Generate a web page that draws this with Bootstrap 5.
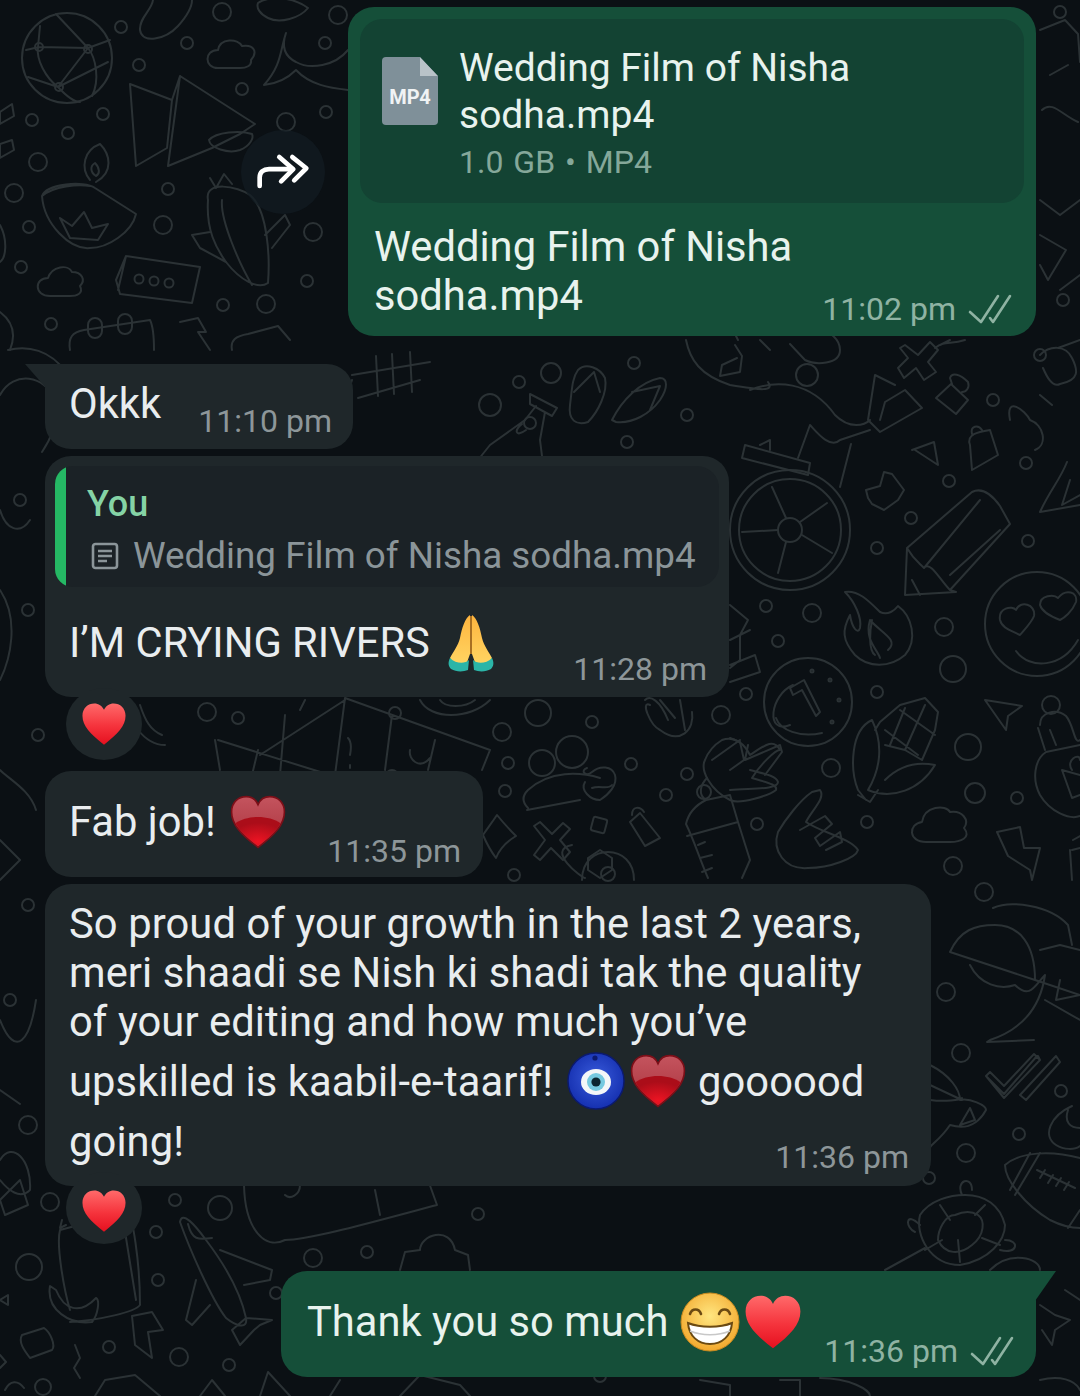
<!doctype html>
<html lang="en">
<head>
<meta charset="utf-8">
<title>Chat</title>
<link href="https://cdn.jsdelivr.net/npm/bootstrap@5.3.0/dist/css/bootstrap.min.css" rel="stylesheet">
<style>
html,body{margin:0;background:#0b1014}
.chat-screen{width:1080px;height:1396px;position:relative;overflow:hidden;background:#0b1014;font-family:Roboto,"Liberation Sans",sans-serif;color:#e9edef;padding-top:7px}
.wall{position:absolute;left:0;top:0;width:1080px;height:1396px}
.wall g.dd{fill:none;stroke:#2b3235;stroke-width:2;stroke-linecap:round;stroke-linejoin:round}
.msg-row{position:relative;display:flex}
.bubble{position:relative;border-radius:26px;display:flex}
.b-in{background:#1f272a;margin-left:45px}
.b-out{background:#154f39;color:#e8f3ee}
.line{font-size:41.7px;line-height:49px;white-space:nowrap}
.line-fix{height:49px;display:flex;align-items:center}
.stamp{font-size:32px;line-height:36px;white-space:nowrap;display:flex;align-items:center;gap:12px}
.b-in .stamp{color:#8d9699}
.b-out .stamp{color:#8fb3a3}
.ticks{width:44px;height:30px}
.fw-btn{width:84px;height:84px;border-radius:50%;background:rgba(18,28,35,.72);margin-right:23px;display:flex;align-items:center;justify-content:center}
.fw-btn svg{width:56px;height:38px}
.b1{width:688px;height:329px;padding:12px;flex-direction:column;margin-right:44px}
.attach{height:184px;border-radius:22px;background:#134333;padding:26px 22px;display:flex;gap:21px}
.file-ic{position:relative;width:56px;height:68px;margin-top:12px;background:#7f9099;border-radius:4px;clip-path:polygon(0 0,68% 0,100% 28%,100% 100%,0 100%);display:flex;align-items:center;justify-content:center;flex:none}
.file-ic span{font-size:20px;font-weight:700;color:#f0f3f4;margin-top:12px;letter-spacing:-.2px}
.fold{position:absolute;right:0;top:0;width:18px;height:19px;background:#b9c3c8;clip-path:polygon(0 0,100% 100%,0 100%)}
.att-title{font-size:39px;line-height:47px;white-space:nowrap}
.att-meta{font-size:32px;line-height:44px;color:#85a89a;white-space:pre;word-spacing:2px;margin-top:1px}
.cap{display:flex;justify-content:space-between;padding:19px 12px 0 14px;flex:1}
.cap .stamp{align-self:flex-end;margin-bottom:-3px}
.b2{width:308px;height:85px;margin-top:28px;padding:15px 21px 0 24px;justify-content:space-between;border-top-left-radius:0}
.b2::before{content:"";position:absolute;left:-20px;top:0;width:21px;height:24px;background:#1f272a;clip-path:polygon(0 0,100% 0,100% 100%)}
.b2 .stamp{margin-top:14px}
.b3{width:684px;height:241px;margin-top:7px;padding:10px;flex-direction:column}
.quote{height:124px;background:#1b2226;border-radius:18px 22px 22px 18px;position:relative;overflow:hidden;padding:10px 0 0 32px}
.quote::before{content:"";position:absolute;left:0;top:0;bottom:0;width:11px;background:#25b864}
.q-name{color:#85d3a5;font-size:36px;line-height:56px;font-weight:500}
.q-text{color:#8b9599;font-size:36.8px;line-height:44px;display:flex;align-items:center;gap:14px;white-space:nowrap;margin:2px 0 0 4px}
.q-text svg{width:28px;height:28px}
.b3-body{display:flex;justify-content:space-between;padding:31px 12px 0 14px}
.b3-body .stamp{margin-top:33px}
.rxn{width:76px;height:72px;border-radius:50%;background:#1f272a;margin-left:66px;display:flex;align-items:center;justify-content:center;position:relative;z-index:2}
.rxn svg{width:48px;height:44px}
.rxn-1{margin-top:-9px}
.rxn-2{margin-top:-14px;padding-top:6px}
.b4{width:438px;height:106px;margin-top:11px;padding:26px 22px 0 24px;justify-content:space-between}
.b4 .stamp{margin-top:27px}
.b5{width:886px;height:302px;margin-top:7px;padding:15px 22px 0 24px;display:block}
.b5 .line{letter-spacing:.1px}
.b5 .stamp{letter-spacing:0}
.em-line{height:60px;display:flex;align-items:center}
.l4{margin-top:5px}
.l5{justify-content:space-between}
.l5 .stamp{margin-top:32px}
.b6{width:755px;height:106px;margin:27px 44px 0 auto;padding:26px 22px 0 26px;justify-content:space-between;border-top-right-radius:0}
.b6::after{content:"";position:absolute;right:-20px;top:0;width:21px;height:30px;background:#154f39;clip-path:polygon(0 0,100% 0,0 100%)}
.b6 .stamp{margin-top:28px}
.em{flex:none;display:inline-block}
.em-pray{width:48px;height:58px;margin-left:7px}
.em-gheart{width:60px;height:54px;margin-left:2px}
.em-nazar{width:58px;height:58px;margin-left:3px}
.em-gheart2{width:60px;height:54px;margin-left:3px}
.em-grin{width:60px;height:60px;margin-left:1px}
.em-rheart{width:60px;height:56px;margin-left:3px}
</style>
</head>
<body>
<div class="chat-screen">
<svg class="wall" viewBox="0 0 1080 1396" aria-hidden="true">
<defs>
<linearGradient id="rh" x1="0" y1="0" x2="0" y2="1"><stop offset="0" stop-color="#ff6a6a"/><stop offset=".55" stop-color="#f5333c"/><stop offset="1" stop-color="#e5101f"/></linearGradient>
<linearGradient id="gh1" x1="0" y1="0" x2="0" y2="1"><stop offset="0" stop-color="#c4545e"/><stop offset="1" stop-color="#a9323c"/></linearGradient>
<radialGradient id="gh2" cx=".5" cy=".85" r=".65"><stop offset="0" stop-color="#ee1423"/><stop offset="1" stop-color="#ab0d19"/></radialGradient>
<radialGradient id="gface" cx=".5" cy=".4" r=".6"><stop offset="0" stop-color="#ffe680"/><stop offset="1" stop-color="#f3a92e"/></radialGradient>
<radialGradient id="nz" cx=".5" cy=".45" r=".55"><stop offset="0" stop-color="#3a5cdc"/><stop offset="1" stop-color="#1530b0"/></radialGradient>
<linearGradient id="pr" x1="0" y1="0" x2="0" y2="1"><stop offset="0" stop-color="#ffb53e"/><stop offset="1" stop-color="#ffd765"/></linearGradient>
<symbol id="heartR" viewBox="0 0 100 96"><path fill="url(#rh)" d="M50 93C20 70 3 52 3 30 3 13 15 3 29 3c9 0 17 5 21 14C54 8 62 3 71 3c14 0 26 10 26 27 0 22-17 40-47 63z"/></symbol>
<symbol id="heartG" viewBox="0 0 100 96"><path fill="url(#gh1)" stroke="#7c0f18" stroke-width="3" d="M50 93C20 70 3 52 3 30 3 13 15 3 29 3c9 0 17 5 21 14C54 8 62 3 71 3c14 0 26 10 26 27 0 22-17 40-47 63z"/><path fill="url(#gh2)" d="M50 91C30 75 17 64 10 50c10-7 25-11 40-11s30 4 40 11C83 64 70 75 50 91z"/></symbol>
</defs>
<g class="dd">
<circle cx="222" cy="12" r="9"/><circle cx="121" cy="27" r="6"/><circle cx="338" cy="15" r="9"/><circle cx="187" cy="43" r="6"/><circle cx="325" cy="43" r="6"/><circle cx="139" cy="65" r="6"/><circle cx="242" cy="89" r="6"/><circle cx="32" cy="120" r="6"/><circle cx="103" cy="114" r="6"/><circle cx="68" cy="133" r="6"/><circle cx="38" cy="162" r="9"/><circle cx="14" cy="193" r="9"/><circle cx="168" cy="189" r="6"/><circle cx="163" cy="225" r="9"/><circle cx="29" cy="227" r="6"/><circle cx="21" cy="267" r="6"/><circle cx="51" cy="324" r="6"/><circle cx="223" cy="305" r="6"/><circle cx="266" cy="304" r="9"/><circle cx="307" cy="281" r="6"/><circle cx="313" cy="232" r="9"/><circle cx="326" cy="112" r="6"/><circle cx="286" cy="122" r="9"/>
<circle cx="993" cy="400" r="6"/><circle cx="1026" cy="463" r="6"/><circle cx="949" cy="481" r="6"/><circle cx="911" cy="518" r="6"/><circle cx="877" cy="548" r="6"/><circle cx="1028" cy="541" r="6"/><circle cx="766" cy="606" r="6"/><circle cx="812" cy="613" r="9"/><circle cx="778" cy="641" r="6"/><circle cx="944" cy="627" r="9"/><circle cx="953" cy="669" r="13"/><circle cx="746" cy="694" r="6"/><circle cx="877" cy="692" r="6"/><circle cx="1051" cy="705" r="9"/><circle cx="968" cy="747" r="13"/><circle cx="831" cy="768" r="9"/><circle cx="975" cy="793" r="10"/><circle cx="1017" cy="798" r="6"/><circle cx="867" cy="822" r="6"/><circle cx="757" cy="824" r="6"/><circle cx="953" cy="866" r="9"/>
<circle cx="538" cy="713" r="13"/><circle cx="592" cy="722" r="6"/><circle cx="502" cy="732" r="9"/><circle cx="508" cy="763" r="6"/><circle cx="505" cy="791" r="6"/><circle cx="542" cy="763" r="13"/><circle cx="572" cy="752" r="16"/><circle cx="631" cy="764" r="6"/><circle cx="687" cy="774" r="6"/><circle cx="666" cy="795" r="6"/><circle cx="721" cy="715" r="9"/><circle cx="514" cy="875" r="6"/>
<circle cx="984" cy="892" r="9"/><circle cx="946" cy="992" r="9"/><circle cx="961" cy="1053" r="9"/><circle cx="1061" cy="1091" r="6"/><circle cx="1019" cy="1134" r="6"/><circle cx="966" cy="1153" r="9"/><circle cx="929" cy="1178" r="6"/>
<circle cx="50" cy="1202" r="9"/><circle cx="175" cy="1200" r="6"/><circle cx="220" cy="1208" r="12"/><circle cx="156" cy="1232" r="6"/><circle cx="29" cy="1267" r="13"/><circle cx="158" cy="1280" r="6"/><circle cx="313" cy="1258" r="9"/><circle cx="367" cy="1252" r="6"/><circle cx="478" cy="1214" r="6"/><circle cx="109" cy="1347" r="6"/><circle cx="179" cy="1357" r="9"/><circle cx="229" cy="1365" r="6"/><circle cx="43" cy="1387" r="8"/><circle cx="276" cy="1293" r="6"/>
<circle cx="551" cy="373" r="10"/><circle cx="519" cy="382" r="6"/><circle cx="490" cy="405" r="11"/><circle cx="634" cy="363" r="6"/><circle cx="687" cy="415" r="6"/><circle cx="627" cy="442" r="6"/>
<circle cx="207" cy="712" r="9"/><circle cx="238" cy="718" r="6"/><circle cx="395" cy="713" r="6"/><circle cx="38" cy="735" r="6"/><circle cx="28" cy="905" r="6"/><circle cx="28" cy="1125" r="9"/><circle cx="10" cy="1000" r="6"/><circle cx="20" cy="500" r="6"/><circle cx="28" cy="610" r="6"/><circle cx="392" cy="776" r="6"/><circle cx="1060" cy="12" r="6"/><circle cx="1063" cy="300" r="6"/><circle cx="1040" cy="355" r="6"/><circle cx="600" cy="1376" r="6"/>
<circle cx="67" cy="58" r="45"/><path d="M26 50 39 47 88 48 110 40M28 77 58 87 108 62M38 47C36 60 46 78 58 87 70 100 76 102 80 102M56 14 88 48C96 58 100 80 92 96M38 47 40 26M58 87 88 48"/><circle cx="39" cy="47" r="4"/><circle cx="88" cy="49" r="4"/><circle cx="59" cy="87" r="4"/>
<path d="M153 0C152 10 139 18 140 30 142 44 165 40 178 26 187 16 192 8 192 0"/>
<path d="M258 3C268 -4 292-4 308 8 300 18 280 24 268 18 260 14 256 8 258 3z"/>
<path d="M218 68C204 68 204 50 218 50 220 38 238 38 242 46 254 44 258 52 251 60 252 66 246 68 240 68z"/>
<path d="M286 33C280 50 288 58 296 62 310 70 335 66 348 50M286 33C280 50 282 65 264 85 274 84 286 80 296 70 310 85 330 88 348 90"/>
<path d="M130 84 172 100 167 148 136 166 130 84zM180 76 255 124 240 134 212 148 168 166 180 76zM180 76 172 100"/>
<path d="M209 140C210 148 228 154 240 150 250 146 254 138 252 134 240 130 216 132 209 140z"/>
<path d="M42 196C46 184 84 180 95 188L136 214C132 232 108 248 90 248 70 250 44 224 42 196zM42 196C54 186 78 184 90 186"/><path d="M90 180C80 168 84 150 100 144 110 154 114 172 96 182M96 176C90 172 90 166 95 163 100 168 100 174 96 176z"/><path d="M60 218 72 226 84 212 92 228 108 224 98 240 70 238z"/>
<path d="M208 200C204 180 238 186 250 195 268 210 270 258 268 283 258 290 240 280 226 262 216 248 206 230 208 200zM222 200C220 220 240 265 252 285M210 178 216 188 224 174 232 184M210 232 192 235 200 248 226 262M265 235 285 215 290 225 272 248"/>
<path d="M126 256 200 267 192 303 120 294 116 280zM126 256 118 290"/><circle cx="139" cy="279" r="4.5"/><circle cx="154" cy="281" r="4.5"/><circle cx="169" cy="283" r="4.5"/>
<path d="M50 296C34 296 34 278 48 278 52 266 68 264 72 272 82 272 86 280 80 286 84 294 76 296 70 296z"/>
<path d="M70 350C68 338 72 332 84 330L150 320C154 328 154 340 154 350"/><rect x="88" y="318" width="14" height="20" rx="7"/><rect x="118" y="314" width="14" height="20" rx="7"/><path d="M180 322 198 318 206 332 198 332 210 350"/><path d="M232 350C230 340 236 336 248 334L278 326 290 340"/><path d="M10 350C18 330 8 318 0 312"/>
<path d="M0 112 12 104 14 116 0 124zM0 144 12 140 14 150 0 158zM0 225C8 240 6 258 0 262"/><path d="M8 350C28 345 50 350 66 372M0 395C14 370 45 375 55 400 60 420 50 440 42 452"/><path d="M0 510C6 530 20 535 30 520M0 590C20 620 10 660 0 680M0 770C10 780 30 790 36 810M0 840 20 860 0 880M0 1020C16 1060 30 1040 36 1000M0 1160C12 1140 32 1160 30 1190 20 1200 8 1190 0 1180M0 1090 20 1104"/>
<path d="M352 375 430 362M358 398 420 380M376 356 378 396M392 354 394 394M410 352 412 392M352 380 344 404"/>
<path d="M530 394 557 408 552 416 530 404zM536 406 525 420 490 445 478 460M545 412 540 440 542 456M522 424C514 430 515 438 526 430"/><circle cx="530" cy="423" r="6"/>
<path d="M578 370C586 362 600 368 605 378 608 392 598 412 588 422 576 426 568 420 570 405 572 390 572 378 578 370zM574 392 594 372 600 392"/>
<path d="M612 420C622 400 640 382 660 378 668 378 668 388 660 400 650 414 632 424 616 422zM632 392 660 386 650 410"/>
<path d="M735 345 742 356 740 372 720 376 722 365 737 358M686 340C690 360 700 375 730 385 760 390 775 392 768 382M738 340 732 328M750 390C775 380 810 380 835 415 850 430 865 425 870 420M895 385 875 375 868 420 880 432 915 412 922 408 905 390 885 402 880 420M870 430 840 440C830 450 815 430 810 425L798 458M851 444 840 487"/>
<path d="M745 445 810 463 808 475 742 458zM760 445 770 440 770 450"/>
<path d="M760 340 770 350 M790 344 805 360 C815 365 840 365 840 350 840 340 830 330 818 330"/><circle cx="807" cy="375" r="11"/>
<circle cx="790" cy="530" r="60"/><circle cx="790" cy="530" r="51"/><circle cx="790" cy="530" r="12"/><path d="M786 518 772 487M800 522 827 503M802 535 832 553M786 542 778 573M778 530 742 532"/>
<path d="M905 345 918 355 930 342 938 350 928 362 936 372 924 380 916 368 904 378 898 368 908 358 900 348z"/>
<path d="M935 348C945 340 950 345 965 340M940 345 950 340"/>
<path d="M936 398 951 384 968 400 956 414zM952 384 950 378C952 372 960 374 968 382 970 388 966 392 962 392"/>
<path d="M970 445C966 434 978 432 990 430L998 455 972 470zM972 434C970 426 978 424 982 430"/>
<path d="M912 450 934 442 938 465 915 450"/>
<path d="M866 490 880 486 884 472 892 474 904 490 898 500 884 510 872 504 868 498z"/>
<path d="M905 595 907 548 972 492C980 488 990 492 1000 506L1010 524 950 590 956 592zM907 548C914 560 918 562 924 568 930 560 940 580 950 590M924 568 980 500M950 575 1000 530M912 580 920 595"/>
<path d="M845 592C858 590 868 600 880 612 888 616 895 610 898 606 912 616 918 640 905 655 890 668 868 668 855 655 842 640 842 630 850 615 852 628 858 635 860 628 862 618 855 602 845 592zM870 620C864 640 878 650 880 658M870 620C880 632 900 640 888 650M875 655C868 650 870 630 872 620"/>
<circle cx="1037" cy="624" r="52"/><path d="M1016 651C1030 670 1062 668 1078 640M1000 620C998 608 1012 605 1016 610 1020 600 1036 604 1034 616 1032 622 1024 630 1020 635 1010 630 1002 628 1000 620zM1040 605C1040 595 1054 594 1058 598 1066 588 1078 592 1076 602 1072 612 1064 618 1060 620 1050 616 1042 612 1040 605z"/>
<circle cx="808" cy="702" r="44"/><path d="M793 685C770 695 765 735 790 725 M776 718C780 730 800 738 822 733"/><path d="M790 688 804 680 820 712 816 716 802 690 793 695z"/>
<circle cx="812" cy="671" r="1.5"/><circle cx="830" cy="680" r="1.5"/><circle cx="839" cy="700" r="1.5"/><circle cx="832" cy="722" r="1.5"/>
<path d="M730 605 748 620 740 635 740 660 730 668 M730 640 750 630M730 665 755 655 760 672 730 682"/>
<path d="M730 738 740 742 744 760 730 770M748 745 745 760 780 745 782 752 765 775M730 790C750 788 778 790 778 782 776 775 760 773 750 770"/>
<path d="M866 800 858 790C850 770 850 730 872 720 884 745 880 770 868 790 892 800 920 790 935 765 910 760 895 770 885 780M875 730 880 722 900 705 925 698 938 712 935 730 922 760 905 750 885 745 M885 730 918 755M900 710 935 735M905 708 890 745M925 705 905 750M858 795 870 802 878 790"/>
<path d="M812 792 820 790C826 798 812 810 806 822 820 832 850 838 858 850 856 858 830 868 808 868 784 870 772 850 778 832 785 820 800 800 812 792zM800 830 825 816 832 824 815 838 820 846 840 832 842 842 826 850"/>
<path d="M985 700 1022 706 1008 716 1006 730z"/>
<path d="M1040 725C1040 712 1056 708 1066 716 1074 725 1074 745 1080 740M1045 750 1038 728M1056 745 1050 730M1080 775 1062 770 1072 798 1080 795M1080 745 1046 752C1034 760 1032 780 1040 795 1050 812 1070 820 1080 816"/><path d="M1072 770C1065 760 1080 752 1080 760"/>
<path d="M926 842C908 842 908 824 922 822 924 806 946 804 950 812 962 810 970 820 964 828 972 838 960 842 950 842z"/>
<path d="M997 832 1020 827 1024 848 1040 848 1032 880 1030 870 1008 856z"/>
<path d="M1072 850 1080 848M1070 850 1072 880M1073 840 1080 836"/>
<path d="M1040 30 1065 20 1078 34 1080 62M1050 75 1068 65M1042 110C1052 100 1062 115 1078 122M1040 200 1060 215 1080 200M1040 235 1066 250 1048 280 1040 265M1060 290 1080 275"/>
<path d="M1040 355C1050 345 1066 345 1072 358 1078 370 1080 380 1060 384 1052 388 1046 375 1043 368M1040 395 1052 405M1058 348 1080 340M1010 420C1005 395 1025 410 1030 420 1044 425 1048 445 1035 450"/>
<path d="M1067 462C1060 480 1050 490 1040 512L1080 505M1070 480 1062 505 1080 495"/>
<path d="M707 778 C700 785 698 795 706 800 694 806 688 815 686 824 694 840 700 860 708 878M687 836 738 822 730 795 706 800M738 822 750 860 742 878"/><path d="M698 845 705 842M700 858 712 855 M702 872 712 868"/><circle cx="704" cy="792" r="7"/>
<path d="M483 835C490 825 495 818 497 815 505 825 510 830 516 836 506 842 500 848 496 858 490 850 486 842 483 835z"/>
<path d="M534 826 540 822 552 834 563 823 570 829 560 840 570 852 563 860 551 848 540 860 534 855 545 840z"/>
<rect x="592" y="818" width="14" height="14" rx="2" transform="rotate(15 599 825)"/>
<path d="M630 822 640 813 660 838 645 846zM632 815C632 806 640 806 644 812"/>
<path d="M572 845C545 850 582 878 585 878M588 858 600 850 612 858 612 870 600 878 588 870zM527 810 580 800M528 808C522 802 522 796 528 790 550 770 580 772 600 778M612 785C608 790 600 785 592 788"/>
<path d="M587 768C580 770 585 778 592 772 600 765 612 766 615 775 618 785 608 795 600 800 590 800 580 790 585 782"/>
<circle cx="608" cy="874" r="7"/><path d="M582 880C582 860 596 852 608 852 622 852 634 862 634 880"/>
<path d="M650 705C640 700 650 725 660 730 680 745 695 730 692 712M645 700C650 695 660 700 668 720M660 700 675 718M680 700 685 730"/>
<path d="M712 760 740 740M705 760C700 770 710 790 730 800 740 805 770 795 776 790 778 784 764 782 752 778 760 765 775 750 780 750 774 738 765 745 750 755 745 745 735 735 722 740 714 745 708 752 705 760z"/>
<path d="M218 740 330 775M220 770 215 740M258 750 252 775M285 715 280 775M345 698 335 775M345 698 490 750 482 770M392 715 385 770M305 700 300 710M435 740 428 770M345 700 260 755M410 750C408 760 420 770 430 758M350 755C352 745 350 740 348 738M350 765V768"/>
<path d="M420 700C430 720 470 720 490 700M440 700C445 708 465 708 475 700"/>
<path d="M130 700C125 720 145 745 165 745M140 705C145 720 150 730 162 735"/>
<path d="M950 952C960 930 975 925 995 925 1020 925 1035 945 1035 980L950 952zM993 908C1010 900 1050 905 1068 925L1072 945M1040 950 1060 945 1080 950M1035 980 1080 995M970 965C980 985 1000 990 1015 985 1030 1000 1035 985 1045 975 1040 1010 1020 1030 990 1040L987 1042 1034 1040M1060 980 1056 1000 1080 995"/>
<path d="M986 1076 1004 1094 1037 1056 1040 1060 1038 1056M986 1076 990 1072 1004 1086 1034 1054 1040 1060 1004 1098zM1020 1095 1056 1056 1060 1062 1026 1100z"/>
<path d="M1072 1106C1050 1116 1042 1136 1056 1145 1064 1150 1075 1150 1080 1146M1068 1110C1064 1122 1070 1128 1080 1128"/>
<path d="M1005 1165C1020 1152 1050 1150 1080 1158M1005 1165C1005 1180 1025 1205 1050 1220 1060 1225 1070 1228 1080 1228M1040 1153 1015 1195M1030 1153 1010 1190M1037 1170 1075 1188M1045 1170 1040 1178M1053 1175 1048 1183M1061 1178 1056 1186M1069 1182 1064 1190M1080 1210 1068 1228"/>
<path d="M930 1065C950 1075 960 1090 960 1100 970 1098 986 1105 986 1110 975 1130 960 1128 950 1125 940 1140 930 1145 930 1148M930 1085 962 1100 M930 1100C945 1102 960 1100 962 1098M970 1108 960 1125 975 1120z"/>
<path d="M965 1195C950 1195 930 1200 920 1215 915 1235 930 1265 960 1265 990 1260 1005 1240 1005 1225 1000 1205 985 1195 965 1195zM955 1215C945 1215 938 1230 938 1240 945 1255 960 1255 972 1245 985 1235 985 1220 978 1215 970 1210 962 1212 955 1215z"/><path d="M962 1195C955 1180 972 1175 972 1190M920 1225C905 1210 905 1228 915 1232M1005 1240C1020 1240 1018 1255 1000 1250M940 1205 950 1220M960 1262 958 1240M985 1205 975 1215M1000 1245 982 1238M925 1250 942 1240M885 1270 925 1248M990 1270C1010 1250 1040 1258 1040 1270"/>
<path d="M1040 1305 1055 1315 1070 1320 1055 1330 1052 1345 1042 1330M1040 1380C1060 1375 1075 1380 1080 1390M1065 1290 1080 1300M700 1380 730 1385 730 1396M780 1380 800 1380 800 1396M820 1378C850 1378 870 1390 870 1396"/>
<path d="M60 1230 128 1212C132 1215 140 1260 140 1305 135 1312 100 1320 70 1322M60 1230C56 1245 64 1290 70 1310M122 1213 136 1300M62 1220 60 1228 66 1225M50 1286C46 1310 70 1325 92 1322 98 1315 100 1300 96 1298 80 1315 64 1310 56 1290L50 1286z"/>
<path d="M22 1335 44 1328C50 1332 56 1345 52 1350L30 1358C24 1350 18 1342 22 1335zM132 1316 152 1312 163 1330 148 1332 152 1358 135 1345zM75 1345 80 1358 74 1368 80 1378"/>
<path d="M180 1222C182 1210 195 1225 206 1240 225 1265 240 1290 246 1318 248 1330 236 1326 226 1318 212 1300 190 1250 180 1222zM188 1224C192 1240 198 1240 212 1238M220 1250 272 1270 270 1280 244 1285M196 1280 186 1320 192 1325 210 1305M246 1318 232 1330 240 1345 254 1330 260 1325 272 1320 246 1318"/>
<path d="M244 1185C245 1230 265 1250 285 1240 310 1240 380 1220 437 1205L428 1180M375 1190 380 1215M300 1185C300 1195 290 1200 285 1195"/>
<path d="M400 1270 405 1252 420 1250C420 1235 450 1225 455 1250L468 1255 470 1270"/>
<path d="M95 1396 105 1380 135 1375 160 1396M5 1390C10 1380 18 1380 24 1388M260 1396 268 1372 290 1396M200 1396 212 1380 225 1396M330 1396 340 1380M400 1396 420 1375 460 1385 470 1396"/>
<path d="M0 1200 20 1180 28 1205 5 1215zM0 1300 8 1295 8 1305zM0 1355 6 1362 0 1368"/>
<path d="M1045 1000 1080 1020"/>
</g>
</svg>

<div class="msg-row justify-content-end align-items-center">
  <div class="fw-btn"><svg viewBox="0 0 60 40" fill="none" stroke="#fff" stroke-width="5" stroke-linecap="round" stroke-linejoin="round"><path d="M5 35V26C5 20 9 17 15 17H40"/><path d="M26 4 41 17 28 30"/><path d="M40 4 55 16 42 29"/></svg></div>
  <div class="bubble b-out b1">
    <div class="attach">
      <div class="file-ic"><i class="fold"></i><span>MP4</span></div>
      <div>
        <div class="att-title">Wedding Film of Nisha<br>sodha.mp4</div>
        <div class="att-meta">1.0 GB • MP4</div>
      </div>
    </div>
    <div class="cap">
      <div class="line">Wedding Film of Nisha<br>sodha.mp4</div>
      <div class="stamp">11:02 pm <svg class="ticks" viewBox="0 0 44 30" fill="none" stroke="#8fb3a3" stroke-width="2.6" stroke-linecap="round" stroke-linejoin="round"><path d="M2 18 13 28 30 2"/><path d="M22 24 25 28 42 2"/></svg></div>
    </div>
  </div>
</div>

<div class="msg-row">
  <div class="bubble b-in b2">
    <div class="line">Okkk</div>
    <div class="stamp">11:10 pm</div>
  </div>
</div>

<div class="msg-row">
  <div class="bubble b-in b3">
    <div class="quote">
      <div class="q-name">You</div>
      <div class="q-text"><svg viewBox="0 0 28 28" fill="none" stroke="#8b9599" stroke-width="2.6"><rect x="2" y="2" width="24" height="24" rx="2.5"/><path d="M7 9H21M7 14H21M7 19H16"/></svg><span>Wedding Film of Nisha sodha.mp4</span></div>
    </div>
    <div class="b3-body">
      <div class="line line-fix">I’M CRYING RIVERS&nbsp;
        <svg class="em em-pray" viewBox="0 0 48 58"><path fill="url(#pr)" d="M23 1C18 4 15 14 13 24 11 32 6 38 3 44 6 50 12 54 18 54L23 40zM25 1C30 4 33 14 35 24 37 32 42 38 45 44 42 50 36 54 30 54L25 40z"/><path fill="#2bb5a8" d="M3 44C1 48 1 52 4 55 9 58 16 58 21 56L22 46C18 50 9 50 3 44zM45 44C47 48 47 52 44 55 39 58 32 58 27 56L26 46C30 50 39 50 45 44z"/><path stroke="#d98a20" stroke-width="1.5" fill="none" d="M24 2V40"/></svg>
      </div>
      <div class="stamp">11:28 pm</div>
    </div>
  </div>
</div>

<div class="rxn rxn-1"><svg viewBox="0 0 100 96"><use href="#heartR"/></svg></div>

<div class="msg-row">
  <div class="bubble b-in b4">
    <div class="line line-fix">Fab job!&nbsp;<svg class="em em-gheart" viewBox="0 0 100 96"><use href="#heartG"/></svg></div>
    <div class="stamp">11:35 pm</div>
  </div>
</div>

<div class="msg-row">
  <div class="bubble b-in b5">
    <div class="line">So proud of your growth in the last 2 years,</div>
    <div class="line">meri shaadi se Nish ki shadi tak the quality</div>
    <div class="line">of your editing and how much you’ve</div>
    <div class="line em-line l4">upskilled is kaabil-e-taarif!&nbsp;<svg class="em em-nazar" viewBox="0 0 58 58"><circle cx="29" cy="29" r="28" fill="url(#nz)" stroke="#0b1a70" stroke-width="1.5"/><circle cx="28" cy="6" r="2.6" fill="#0c1a70"/><ellipse cx="29" cy="30" rx="15" ry="13" fill="#f4f6f8"/><circle cx="29" cy="30" r="9" fill="#76c9e0"/><circle cx="29" cy="30" r="4.6" fill="#0b2530"/></svg><svg class="em em-gheart2" viewBox="0 0 100 96"><use href="#heartG"/></svg>&nbsp;goooood</div>
    <div class="line em-line l5"><span>going!</span><span class="stamp">11:36 pm</span></div>
  </div>
</div>

<div class="rxn rxn-2"><svg viewBox="0 0 100 96"><use href="#heartR"/></svg></div>

<div class="bubble b-out b6">
  <div class="line line-fix">Thank you so much&nbsp;<svg class="em em-grin" viewBox="0 0 60 60"><circle cx="30" cy="30" r="29" fill="url(#gface)" stroke="#c98a1f" stroke-width="1"/><path d="M10 22C12 16 19 16 21 22M39 22C41 16 48 16 50 22" fill="none" stroke="#6b4a12" stroke-width="2.6" stroke-linecap="round"/><path d="M8 31C20 36 40 36 52 31 51 44 42 52 30 52 18 52 9 44 8 31z" fill="#fff" stroke="#6b4a12" stroke-width="2"/><path d="M10 39C22 44 38 44 50 39" stroke="#c8c8c8" stroke-width="1.5" fill="none"/></svg><svg class="em em-rheart" viewBox="0 0 100 96"><use href="#heartR"/></svg></div>
  <div class="stamp">11:36 pm <svg class="ticks" viewBox="0 0 44 30" fill="none" stroke="#8fb3a3" stroke-width="2.6" stroke-linecap="round" stroke-linejoin="round"><path d="M2 18 13 28 30 2"/><path d="M22 24 25 28 42 2"/></svg></div>
</div>
</div>
<script src="https://cdn.jsdelivr.net/npm/bootstrap@5.3.0/dist/js/bootstrap.bundle.min.js"></script>
</body>
</html>
